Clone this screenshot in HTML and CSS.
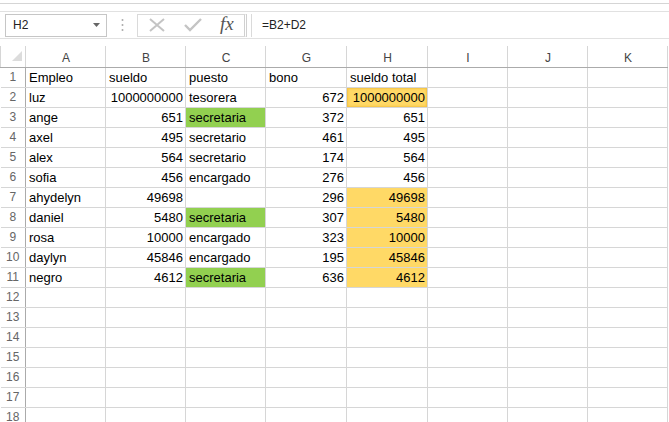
FILE: index.html
```html
<!DOCTYPE html>
<html lang="es">

<head>
  <meta charset="UTF-8">
  <title>Libro1 - Excel</title>
  <link rel="stylesheet" href="styles.css">
</head>

<body>
  <div class="ribbon-edge"></div>
  <div class="formula-bar">
    <div class="name-box">
      <span>H2</span>
      <svg class="drop" width="7" height="4" viewBox="0 0 7 4"><path d="M0 0h7L3.5 4z" fill="#666"/></svg>
    </div>
    <div class="grip">
      <svg width="3" height="14" viewBox="0 0 3 14"><circle cx="1.5" cy="2" r="1" fill="#aaa"/><circle cx="1.5" cy="7" r="1" fill="#aaa"/><circle cx="1.5" cy="12" r="1" fill="#aaa"/></svg>
    </div>
    <div class="fx-buttons">
      <svg width="18" height="14" viewBox="0 0 18 14"><path d="M2 1l14 12M16 1L2 13" stroke="#c4c4c4" stroke-width="2" fill="none"/></svg>
      <svg width="20" height="14" viewBox="0 0 20 14"><path d="M2 7l5 5L18 1" stroke="#c4c4c4" stroke-width="2.4" fill="none"/></svg>
      <span class="fx">fx</span>
    </div>
    <div class="formula-input">=B2+D2</div>
  </div>

  <table class="sheet">
    <colgroup>
      <col class="c-row"><col class="c-std"><col class="c-std"><col class="c-std"><col class="c-wide"><col class="c-wide"><col class="c-std"><col class="c-std"><col class="c-std">
    </colgroup>
    <thead>
      <tr>
        <th class="corner"><svg width="10" height="10" viewBox="0 0 10 10"><path d="M10 0v10H0z" fill="#dcdcdc"/></svg></th>
        <th>A</th><th>B</th><th>C</th><th>G</th><th>H</th><th>I</th><th>J</th><th>K</th>
      </tr>
    </thead>
    <tbody>
      <tr><th>1</th><td>Empleo</td><td>sueldo</td><td>puesto</td><td>bono</td><td>sueldo total</td><td></td><td></td><td></td></tr>
      <tr><th>2</th><td>luz</td><td class="num">1000000000</td><td>tesorera</td><td class="num">672</td><td class="num gold active">1000000000</td><td></td><td></td><td></td></tr>
      <tr><th>3</th><td>ange</td><td class="num">651</td><td class="green">secretaria</td><td class="num">372</td><td class="num">651</td><td></td><td></td><td></td></tr>
      <tr><th>4</th><td>axel</td><td class="num">495</td><td>secretario</td><td class="num">461</td><td class="num">495</td><td></td><td></td><td></td></tr>
      <tr><th>5</th><td>alex</td><td class="num">564</td><td>secretario</td><td class="num">174</td><td class="num">564</td><td></td><td></td><td></td></tr>
      <tr><th>6</th><td>sofia</td><td class="num">456</td><td>encargado</td><td class="num">276</td><td class="num">456</td><td></td><td></td><td></td></tr>
      <tr><th>7</th><td>ahydelyn</td><td class="num">49698</td><td></td><td class="num">296</td><td class="num gold">49698</td><td></td><td></td><td></td></tr>
      <tr><th>8</th><td>daniel</td><td class="num">5480</td><td class="green">secretaria</td><td class="num">307</td><td class="num gold">5480</td><td></td><td></td><td></td></tr>
      <tr><th>9</th><td>rosa</td><td class="num">10000</td><td>encargado</td><td class="num">323</td><td class="num gold">10000</td><td></td><td></td><td></td></tr>
      <tr><th>10</th><td>daylyn</td><td class="num">45846</td><td>encargado</td><td class="num">195</td><td class="num gold">45846</td><td></td><td></td><td></td></tr>
      <tr><th>11</th><td>negro</td><td class="num">4612</td><td class="green">secretaria</td><td class="num">636</td><td class="num gold">4612</td><td></td><td></td><td></td></tr>
      <tr><th>12</th><td></td><td></td><td></td><td></td><td></td><td></td><td></td><td></td></tr>
      <tr><th>13</th><td></td><td></td><td></td><td></td><td></td><td></td><td></td><td></td></tr>
      <tr><th>14</th><td></td><td></td><td></td><td></td><td></td><td></td><td></td><td></td></tr>
      <tr><th>15</th><td></td><td></td><td></td><td></td><td></td><td></td><td></td><td></td></tr>
      <tr><th>16</th><td></td><td></td><td></td><td></td><td></td><td></td><td></td><td></td></tr>
      <tr><th>17</th><td></td><td></td><td></td><td></td><td></td><td></td><td></td><td></td></tr>
      <tr><th>18</th><td></td><td></td><td></td><td></td><td></td><td></td><td></td><td></td></tr>
    </tbody>
  </table>
</body>

</html>
```

FILE: styles.css
```css
body {
  margin: 0;
  background: #fff;
  font-family: 'Liberation Sans', Arial, sans-serif;
  color: #000;
  overflow: hidden;
}

.ribbon-edge {
  height: 3px;
  border-bottom: 1px solid #d5d5d5;
}

/* formula bar */
.formula-bar {
  display: flex;
  align-items: center;
  height: 26px;
  margin-top: 7px;
  border-top: 1px solid #e1e1e1;
  border-bottom: 1px solid #e1e1e1;
}

.name-box {
  display: flex;
  align-items: center;
  justify-content: space-between;
  box-sizing: border-box;
  width: 102px;
  height: 23px;
  margin-left: 5px;
  padding: 0 6px 0 7px;
  border: 1px solid #c6c6c6;
  font-size: 12px;
  color: #222;
}

.grip {
  width: 30px;
  display: flex;
  justify-content: center;
}

.fx-buttons {
  display: flex;
  align-items: center;
  gap: 17px;
  box-sizing: border-box;
  width: 110px;
  height: 23px;
  padding: 0 6px 0 10px;
  border: 1px solid #dadada;
  border-right: 3px double #d0d0d0;
}

.fx {
  font-family: 'Liberation Serif', 'Times New Roman', serif;
  font-style: italic;
  font-size: 19px;
  color: #555;
  margin-top: -2px;
}

.formula-input {
  flex: 1;
  box-sizing: border-box;
  height: 23px;
  line-height: 22px;
  margin-left: 4px;
  padding-left: 10px;
  border-left: 1px solid #dadada;
  font-size: 12px;
  color: #222;
}

/* grid */
.sheet {
  margin-top: 7px;
  border-collapse: collapse;
  table-layout: fixed;
  width: 667px;
  font-size: 13px;
}

.c-row { width: 25px; }
.c-std { width: 80px; }
.c-wide { width: 81px; }

.sheet th,
.sheet td {
  box-sizing: border-box;
  height: 20px;
  padding: 0 2px 0 3px;
  border: 1px solid #d6d6d6;
  white-space: nowrap;
  overflow: hidden;
}

.sheet thead th {
  height: 21px;
  padding-top: 4px;
  font-weight: normal;
  font-size: 12px;
  color: #444;
  border-top: none;
  border-bottom: 1px solid #ababab;
}

.sheet thead th.corner {
  text-align: right;
  vertical-align: bottom;
  padding: 0 3px 3px 0;
}

.sheet tbody th {
  font-weight: normal;
  font-size: 12px;
  color: #666;
  text-align: center;
  padding: 0;
  border-left: none;
  border-right: 1px solid #ababab;
}

.sheet td.num {
  text-align: right;
}

.sheet td.green {
  background: #92d050;
}

.sheet td.gold {
  background: #ffd966;
}

.sheet td.active {
  box-shadow: inset 0 0 2px 1px #f5c242;
}
```
